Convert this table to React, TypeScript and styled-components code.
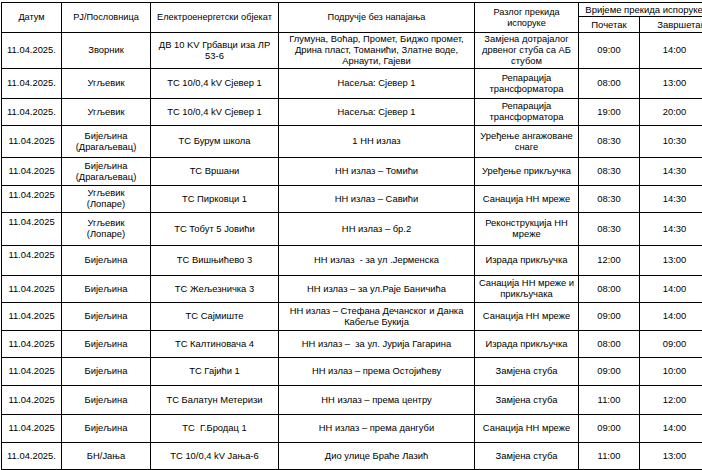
import React from "react";
import styled, { createGlobalStyle } from "styled-components";

type Outage = {
  date: string;
  unit: string;
  object: string;
  area: string;
  reason: string;
  start: string;
  end: string;
  h: number;
  top?: boolean;
};

const rows: Outage[] = [
  {
    date: "11.04.2025.",
    unit: "Зворник",
    object: "ДВ 10 KV Грбавци иза ЛР\n53-6",
    area: "Глумуна, Воћар, Промет, Биджо промет,\nДрина пласт, Томанићи, Златне воде,\nАрнаути, Гајеви",
    reason: "Замјена дотрајалог\nдрвеног стуба са АБ\nстубом",
    start: "09:00",
    end: "14:00",
    h: 33,
  },
  {
    date: "11.04.2025.",
    unit: "Угљевик",
    object: "ТС 10/0,4 kV Сјевер 1",
    area: "Насеља: Сјевер 1",
    reason: "Репарација\nтрансформатора",
    start: "08:00",
    end: "13:00",
    h: 30,
  },
  {
    date: "11.04.2025.",
    unit: "Угљевик",
    object: "ТС 10/0,4 kV Сјевер 1",
    area: "Насеља: Сјевер 1",
    reason: "Репарација\nтрансформатора",
    start: "19:00",
    end: "20:00",
    h: 27,
  },
  {
    date: "11.04.2025",
    unit: "Бијељина\n(Драгаљевац)",
    object: "ТС Бурум школа",
    area: "1 НН излаз",
    reason: "Уређење ангажоване\nснаге",
    start: "08:30",
    end: "10:30",
    h: 32,
  },
  {
    date: "11.04.2025",
    unit: "Бијељина\n(Драгаљевац)",
    object: "ТС Вршани",
    area: "НН излаз – Томићи",
    reason: "Уређење прикључка",
    start: "08:30",
    end: "14:30",
    h: 28,
  },
  {
    date: "11.04.2025",
    unit: "Угљевик\n(Лопаре)",
    object: "ТС Пирковци 1",
    area: "НН излаз – Савићи",
    reason: "Санација НН мреже",
    start: "08:30",
    end: "14:30",
    h: 27,
    top: true,
  },
  {
    date: "11.04.2025",
    unit: "Угљевик\n(Лопаре)",
    object: "ТС Тобут 5 Јовићи",
    area: "НН излаз – бр.2",
    reason: "Реконструкција НН\nмреже",
    start: "08:30",
    end: "14:30",
    h: 33,
    top: true,
  },
  {
    date: "11.04.2025",
    unit: "Бијељина",
    object: "ТС Вишњићево 3",
    area: "НН излаз  - за ул .Јерменска",
    reason: "Израда прикључка",
    start: "12:00",
    end: "13:00",
    h: 30,
    top: true,
  },
  {
    date: "11.04.2025",
    unit: "Бијељина",
    object: "ТС Жељезничка 3",
    area: "НН излаз – за ул.Раје Баничића",
    reason: "Санација НН мреже и\nприкључака",
    start: "08:00",
    end: "14:00",
    h: 27,
  },
  {
    date: "11.04.2025",
    unit: "Бијељина",
    object: "ТС Сајмиште",
    area: "НН излаз – Стефана Дечанског и Данка\nКабеље Букија",
    reason: "Санација НН мреже",
    start: "09:00",
    end: "14:00",
    h: 28,
  },
  {
    date: "11.04.2025",
    unit: "Бијељина",
    object: "ТС Калтиновача 4",
    area: "НН излаз –  за ул. Јурија Гагарина",
    reason: "Израда прикључка",
    start: "08:00",
    end: "09:00",
    h: 27,
  },
  {
    date: "11.04.2025",
    unit: "Бијељина",
    object: "ТС Гајићи 1",
    area: "НН излаз – према Остојићеву",
    reason: "Замјена стуба",
    start: "09:00",
    end: "10:00",
    h: 28,
  },
  {
    date: "11.04.2025",
    unit: "Бијељина",
    object: "ТС Балатун Метеризи",
    area: "НН излаз – према центру",
    reason: "Замјена стуба",
    start: "11:00",
    end: "12:00",
    h: 29,
  },
  {
    date: "11.04.2025",
    unit: "Бијељина",
    object: "ТС  Г.Бродац 1",
    area: "НН излаз – према дангуби",
    reason: "Санација НН мреже",
    start: "09:00",
    end: "14:00",
    h: 28,
  },
  {
    date: "11.04.2025.",
    unit: "БН/Јања",
    object: "ТС 10/0,4 kV Јања-6",
    area: "Дио улице Браће Лазић",
    reason: "Замјена стуба",
    start: "11:00",
    end: "13:00",
    h: 27,
  },
];

// ширине колона по снимку, задња излази преко ивице
const colWidths = [60, 89, 128, 196, 104, 61, 70];

export default function App() {
  return (
    <Frame>
      <GlobalStyle />
      <Table>
        <colgroup>
          {colWidths.map((w, i) => (
            <col key={i} style={{ width: w }} />
          ))}
        </colgroup>
        <thead>
          <Row $h={14}>
            <Head rowSpan={2}>Датум</Head>
            <Head rowSpan={2}>РЈ/Пословница</Head>
            <Head rowSpan={2}>Електроенергетски објекат</Head>
            <Head rowSpan={2}>Подручје без напајања</Head>
            <Head rowSpan={2}>{"Разлог прекида\nиспоруке"}</Head>
            <TimeHead colSpan={2}>Вријеме прекида испоруке</TimeHead>
          </Row>
          <Row $h={16}>
            <TimeHead>Почетак</TimeHead>
            <TimeHead $indent>Завршетак</TimeHead>
          </Row>
        </thead>
        <tbody>
          {rows.map((r, i) => (
            <Row key={i} $h={r.h}>
              <Cell $top={r.top}>{r.date}</Cell>
              <Cell>{r.unit}</Cell>
              <Cell>{r.object}</Cell>
              <Cell>{r.area}</Cell>
              <Cell>{r.reason}</Cell>
              <Cell>{r.start}</Cell>
              <Cell>{r.end}</Cell>
            </Row>
          ))}
        </tbody>
      </Table>
    </Frame>
  );
}

const GlobalStyle = createGlobalStyle`
  html, body {
    margin: 0;
    padding: 0;
    overflow: hidden;
    background: #fff;
  }
  body {
    font-family: "Liberation Sans", Arial, sans-serif;
    color: #000;
  }
`;

const Frame = styled.div`
  width: 702px;
  height: 470px;
  overflow: hidden;
  padding: 2px 0 0 1px;
  box-sizing: border-box;
`;

const Table = styled.table`
  width: 708px;
  table-layout: fixed;
  border-collapse: collapse;
  border: 1px solid #000;
`;

const Row = styled.tr<{ $h: number }>`
  height: ${(p) => p.$h}px;
`;

const Head = styled.th`
  border: 1px solid #000;
  padding: 0 1px;
  font-size: 9.2px;
  font-weight: normal;
  line-height: 11px;
  text-align: center;
  vertical-align: middle;
  white-space: pre-wrap;
  overflow: hidden;
`;

const TimeHead = styled(Head)<{ $indent?: boolean }>`
  font-size: 9.5px;
  white-space: nowrap;
  padding-left: ${(p) => (p.$indent ? "14px" : "1px")};
`;

const Cell = styled.td<{ $top?: boolean }>`
  border: 1px solid #000;
  padding: ${(p) => (p.$top ? "3px 1px 0" : "0 1px 2px")};
  font-size: 9.4px;
  line-height: 11px;
  text-align: center;
  vertical-align: ${(p) => (p.$top ? "top" : "middle")};
  white-space: pre-wrap;
  overflow: hidden;
`;
